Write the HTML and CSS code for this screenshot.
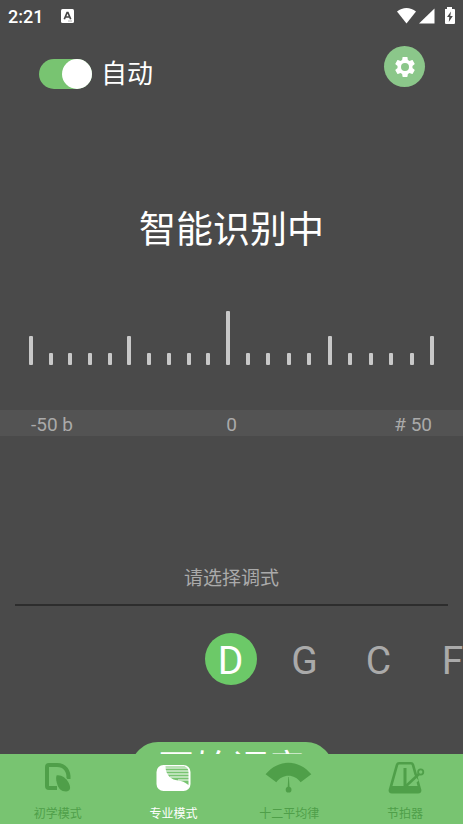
FILE: index.html
```html
<!DOCTYPE html>
<html lang="zh-CN">
<head>
<meta charset="utf-8">
<meta name="viewport" content="width=device-width, initial-scale=1">
<title>调音器</title>
<link rel="stylesheet" href="styles.css">
</head>
<body>
<div class="status">
  <span class="time">2:21</span>
  <svg class="status-app" width="13" height="14" viewBox="0 0 13 14"><rect width="13" height="14" rx="1.5" fill="#fff"/><path d="M3.3 10.3 6.1 3.5h.8l2.8 6.8M4.4 8h4.2" fill="none" stroke="#444" stroke-width="1.7"/><path d="M7 12h4" stroke="#999" stroke-width=".8"/></svg>
  <svg class="status-icons" width="60" height="18" viewBox="0 0 60 18" fill="#fff"><path d="M2 4.500C7.500-.2 15.500-.2 21 4.500L11.500 16.500z"/><path d="M39.500 1.500v15H24z"/><path d="M50 2h2V0h5v2h2q1 0 1 1v13q0 1-1 1h-8q-1 0-1-1z"/><path d="M56 4.500 52 10h2.300l-.5 5 4-6h-2.500z" fill="#4a4a4a"/></svg>
</div>
<main class="page">
  <header class="top">
    <label class="auto"><input class="switch" type="checkbox" role="switch" checked>自动</label>
    <button class="settings" type="button" aria-label="设置">
      <svg width="24" height="24" viewBox="0 0 24 24" fill="#fff"><path d="M19.430 12.980c.04-.32.07-.64.07-.98s-.03-.66-.07-.98l2.110-1.650c.19-.15.24-.42.12-.64l-2-3.460c-.12-.22-.39-.3-.61-.22l-2.490 1c-.52-.4-1.080-.73-1.690-.98l-.38-2.650C14.460 2.180 14.250 2 14 2h-4c-.25 0-.46.18-.49.42l-.38 2.650c-.61.25-1.170.59-1.690.98l-2.490-1c-.23-.09-.49 0-.61.22l-2 3.460c-.13.22-.07.49.12.64l2.110 1.650c-.04.32-.07.65-.07.98s.03.66.07.98l-2.110 1.650c-.19.15-.24.42-.12.64l2 3.460c.12.22.39.3.61.22l2.490-1c.52.4 1.080.73 1.690.98l.38 2.650c.03.24.24.42.49.42h4c.25 0 .46-.18.49-.42l.38-2.650c.61-.25 1.170-.59 1.690-.98l2.490 1c.23.09.49 0 .61-.22l2-3.460c.12-.22.07-.49-.12-.64zM12 16a4 4 0 1 1 0-8 4 4 0 0 1 0 8z"/></svg>
    </button>
  </header>
  <h1 class="state">智能识别中</h1>
  <div class="gauge" aria-hidden="true">
    <div class="half flat"><i class="mid"></i><i></i><i></i><i></i><i></i><i class="mid"></i><i></i><i></i><i></i><i></i><i class="center"></i></div>
    <div class="half sharp"><i></i><i></i><i></i><i></i><i class="mid"></i><i></i><i></i><i></i><i></i><i class="mid"></i></div>
  </div>
  <div class="scale"><span>-50 b</span><span>0</span><span class="end"># 50</span></div>
  <p class="prompt">请选择调式</p>
  <div class="keys">
    <button class="key active" type="button">D</button>
    <button class="key" type="button">G</button>
    <button class="key" type="button">C</button>
    <button class="key" type="button">F</button>
  </div>
  <button class="start" type="button">开始调音</button>
</main>
<nav class="tabs">
  <a class="tab" href="#beginner">
    <svg width="48" height="36" viewBox="0 0 48 36"><path d="M23 28h-8q-2 0-2-2V7q0-2 2-2h8c8 0 12 6 11.500 14" fill="none" stroke="currentColor" stroke-width="4"/><path d="M22.500 15.500C27 14.500 32 18 34.500 22.500 37.500 28 36 31.500 32 31.500 27 31.500 24.500 28 23.500 25 22.500 22 21.500 18.500 22.500 15.500z" fill="currentColor" stroke="#78c471" stroke-width="2" paint-order="stroke"/></svg>
    初学模式</a>
  <a class="tab current" href="#pro" aria-current="page">
    <svg width="48" height="36" viewBox="0 0 48 36"><rect x="6.500" y="5" width="34" height="26" rx="7" fill="currentColor"/><path d="M15.500 6.500h19q4 1 4 6v12.500l-3-2c-3-2-6-2.500-10-3-5-1-10-6-10-13.500z" fill="#78c471"/><path d="M15 8h23M15.500 11h24M17 14h22M20 17h19M28 20h11" stroke="currentColor" stroke-width="1"/></svg>
    专业模式</a>
  <a class="tab" href="#temperament">
    <svg width="48" height="36" viewBox="0 0 48 36" fill="currentColor"><path d="M.6 14.300C13-1.200 34-1.200 46.300 14.300L35.600 22.200C29.500 13.500 17.500 13.500 11.300 22.200z"/><path d="M23.300 17h.6l.7 11h-2z"/><circle cx="23.600" cy="29.700" r="2.900"/></svg>
    十二平均律</a>
  <a class="tab" href="#metronome">
    <svg width="48" height="36" viewBox="0 0 48 36"><path d="M18 3.300h12q1.500 0 2 1.500l7 25q.5 2.500-2 2.500H11q-2.500 0-2-2.500l7-25q.5-1.500 2-1.500z" fill="none" stroke="currentColor" stroke-width="2.600"/><path d="M10 26h28l1 6H9z" fill="currentColor"/><path d="M24 8v18" stroke="currentColor" stroke-width="3"/><path d="M32 16.500 36 22" stroke="#78c471" stroke-width="4"/><path d="M24.500 26.500 38 14" stroke="currentColor" stroke-width="2.600"/><circle cx="39.700" cy="12" r="2.600" fill="#78c471" stroke="currentColor" stroke-width="1.800"/></svg>
    节拍器</a>
</nav>
</body>
</html>
```
FILE: styles.css
```css
* { box-sizing: border-box; }

body {
  margin: 0;
  height: 100vh;
  display: flex;
  flex-direction: column;
  overflow: hidden;
  background: #4a4a4a;
  color: #fff;
  font-family: Roboto, "Noto Sans CJK SC", sans-serif;
}

button {
  border: 0;
  padding: 0;
  font-family: inherit;
  color: inherit;
}

.status {
  flex: none;
  display: flex;
  align-items: center;
  height: 32px;
  padding: 0 8px;
}
.time { font-size: 18px; font-weight: 500; }
.status-app { margin-left: 18px; }
.status-icons { margin-left: auto; }

.page {
  flex: 1;
  min-height: 0;
  overflow: hidden;
  display: flex;
  flex-direction: column;
}
.page > * { flex: none; }

.top {
  display: flex;
  justify-content: space-between;
  align-items: flex-start;
  margin-top: 14px;
  padding: 0 38px 0 39px;
}
.auto {
  display: flex;
  align-items: center;
  gap: 9px;
  height: 56px;
  font-size: 26px;
  line-height: 36px;
}
.switch {
  appearance: none;
  display: flex;
  justify-content: flex-end;
  width: 53px;
  height: 30px;
  margin: 0;
  border-radius: 15px;
  background: #78c471;
}
.switch::before {
  content: "";
  width: 30px;
  height: 30px;
  border-radius: 50%;
  background: #fff;
}
.switch:not(:checked) { justify-content: flex-start; background: #888; }
.settings {
  display: grid;
  place-items: center;
  width: 41px;
  height: 41px;
  border-radius: 50%;
  background: #8bc78a;
}

.state {
  margin: 102px 0 0;
  font-size: 37px;
  font-weight: 400;
  line-height: 54px;
  text-align: center;
}

.gauge {
  display: flex;
  height: 54px;
  margin-top: 53px;
  padding: 0 29px;
}
.half {
  display: flex;
  justify-content: space-between;
  align-items: flex-end;
}
.flat { flex: 201; }
.sharp { flex: 188; padding-left: 16px; }
.half i {
  width: 4px;
  height: 12px;
  border-radius: 1px;
  background: #c8c8c8;
}
.half .mid { height: 29px; }
.half .center { height: 54px; }

.scale {
  display: grid;
  grid-template-columns: 1fr auto 1fr;
  margin-top: 45px;
  padding: 3px 31px 0;
  background: #535353;
  color: #aaa;
  font-size: 19px;
  line-height: 23px;
}
.end { text-align: right; }

.prompt {
  margin: 129px 15px 0;
  padding-bottom: 11px;
  border-bottom: 2px solid #2d2d2d;
  color: #aaa;
  font-size: 19px;
  line-height: 28px;
  text-align: center;
}

.keys {
  display: flex;
  gap: 22px;
  margin-top: 27px;
  padding-left: calc(50% - 27px);
  overflow: hidden;
}
.key {
  flex: none;
  width: 52px;
  height: 52px;
  padding-top: 4px;
  border-radius: 50%;
  background: none;
  color: #aaa;
  font-size: 39px;
  line-height: 48px;
}
.key.active { background: #6cc968; color: #fff; }

.start {
  align-self: center;
  margin-top: 57px;
  padding: 1px 27px 0;
  border-radius: 27px;
  background: #78c471;
  font-size: 37px;
  line-height: 54px;
}

.tabs {
  flex: none;
  display: grid;
  grid-template-columns: repeat(4, 1fr);
  height: 70px;
  padding-top: 6px;
  background: #78c471;
}
.tab {
  display: flex;
  flex-direction: column;
  align-items: center;
  gap: 9px;
  color: #4f9f49;
  font-size: 12px;
  line-height: 18px;
  text-decoration: none;
}
.tab.current { color: #fff; }
```
